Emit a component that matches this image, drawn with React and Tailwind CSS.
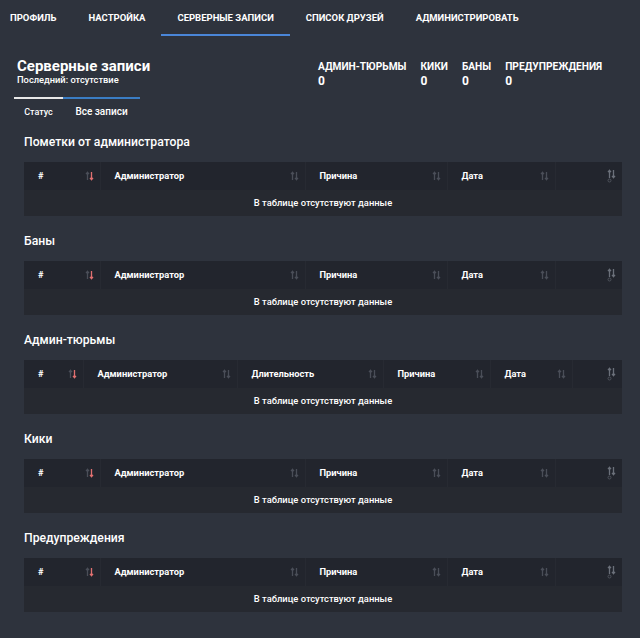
import React from 'react';

const navItems = ['Профиль', 'Настройка', 'Серверные записи', 'Список друзей', 'Администрировать'];

const stats = [
    ['Админ-тюрьмы', 0],
    ['Кики', 0],
    ['Баны', 0],
    ['Предупреждения', 0],
];

const cols4 = [
    { title: '#', w: 'w-[76px]' },
    { title: 'Администратор', w: 'w-[205px]' },
    { title: 'Причина', w: 'w-[142px]' },
    { title: 'Дата', w: 'w-[108px]' },
    { title: '', w: 'w-[67px]' },
];

const cols5 = [
    { title: '#', w: 'w-[59px]' },
    { title: 'Администратор', w: 'w-[154px]' },
    { title: 'Длительность', w: 'w-[146px]' },
    { title: 'Причина', w: 'w-[107px]' },
    { title: 'Дата', w: 'w-[82px]' },
    { title: '', w: 'w-[50px]' },
];

const sections = [
    { title: 'Пометки от администратора', cols: cols4 },
    { title: 'Баны', cols: cols4 },
    { title: 'Админ-тюрьмы', cols: cols5 },
    { title: 'Кики', cols: cols4 },
    { title: 'Предупреждения', cols: cols4 },
];

const SortIcon = ({ active, plain }) => {
    const up = plain ? '#6b707a' : '#4a4e58';
    const down = active ? '#e07070' : plain ? '#6b707a' : '#4a4e58';
    return (
        <svg width="9" height={plain ? 14 : 10} viewBox={plain ? '0 0 9 14' : '0 0 9 10'} className="shrink-0">
            <path d="M2.5 9V1.5M1 3.2L2.5 1.3L4 3.2" stroke={up} strokeWidth="1.3" fill="none" />
            <path d="M6.5 1V8.5M5 6.8L6.5 8.7L8 6.8" stroke={down} strokeWidth="1.3" fill="none" />
            {plain && <circle cx="2.5" cy="11.5" r="1.5" stroke="#555a63" strokeWidth="0.8" fill="none" />}
        </svg>
    );
};

const DataTable = ({ cols }) => (
    <table className="w-full table-fixed border-collapse">
        <thead>
            <tr className="bg-[#22252d] h-[28px]">
                {cols.map((c, i) => (
                    <th
                        key={i}
                        className={`${c.w} p-0 text-left font-bold text-[9.3px] text-white ${i > 0 ? 'border-l border-[#272a32]' : ''}`}
                    >
                        <div className="flex items-center justify-between pl-[14px] pr-[6px]">
                            <span>{c.title}</span>
                            <SortIcon active={i === 0} plain={i === cols.length - 1} />
                        </div>
                    </th>
                ))}
            </tr>
        </thead>
        <tbody>
            <tr className="bg-[#262930] h-[26px]">
                <td colSpan={cols.length} className="text-center text-[9.4px] font-medium text-white">
                    В таблице отсутствуют данные
                </td>
            </tr>
        </tbody>
    </table>
);

const App = () => {
    return (
        <div className="min-h-screen bg-[#2e333d] font-['Roboto',sans-serif] text-white pb-[30px]">
            <nav className="flex h-[36px] -ml-[6px]">
                {navItems.map((item, i) => (
                    <div
                        key={item}
                        className={`flex items-center px-[16px] uppercase font-bold text-[9.5px] ${i === 2 ? 'border-b-2 border-[#4a86d8] pt-[2px]' : ''}`}
                    >
                        {item}
                    </div>
                ))}
            </nav>

            <div className="flex pt-[20px] pl-[17px]">
                <div className="w-[301px]">
                    <h1 className="text-[15px] leading-[20px] font-bold">Серверные записи</h1>
                    <p className="text-[9.3px] leading-[12px] font-medium mt-[-2px]">Последний: отсутствие</p>
                </div>
                <div className="flex gap-[14px] pt-[4px]">
                    {stats.map(([label, value]) => (
                        <div key={label} className="font-bold">
                            <div className="uppercase text-[10.2px] leading-[14px]">{label}</div>
                            <div className="text-[12px] leading-[14px]">{value}</div>
                        </div>
                    ))}
                </div>
            </div>

            <div className="flex ml-[14px] mt-[9px]">
                <div className="w-[49px] border-t-2 border-[#e8e8e8] pt-[6px] text-center text-[9px] leading-[14px] font-medium">
                    Статус
                </div>
                <div className="w-[77px] border-t-2 border-[#3a7dc4] pt-[6px] text-center text-[10px] leading-[14px] font-medium">
                    Все записи
                </div>
            </div>

            <div className="pl-[24px] pr-[18px] pt-[15px] flex flex-col gap-[17px]">
                {sections.map((s) => (
                    <section key={s.title}>
                        <h2 className="text-[12.2px] leading-[16px] font-medium mb-[12px]">{s.title}</h2>
                        <DataTable cols={s.cols} />
                    </section>
                ))}
            </div>
        </div>
    );
};

export default App;
